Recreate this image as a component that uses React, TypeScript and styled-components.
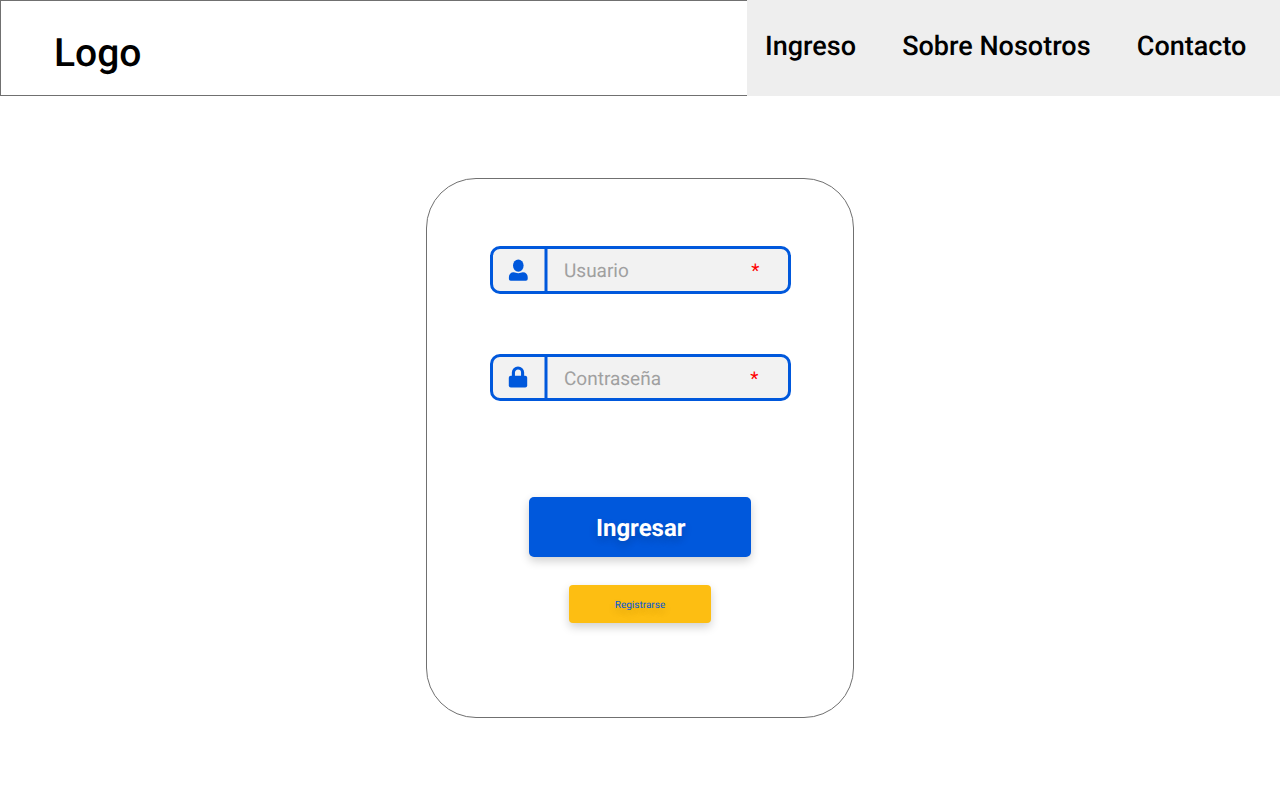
import React from "react";
import styled, { createGlobalStyle } from "styled-components";

const Global = createGlobalStyle`
  *, *::before, *::after { box-sizing: border-box; }
  body { margin: 0; background: #fff; font-family: Roboto, sans-serif; text-rendering: geometricPrecision; }
  button { text-rendering: inherit; }
`;
const Page = styled.div`
  min-height: 800px;
`;
const Header = styled.header`
  display: flex;
  height: 96px;
`;
const Brand = styled.div`
  width: 747px;
  border: 1px solid #707070;
  border-right: 0;
  padding: 29px 0 0 53px;
  font-size: 39px;
  line-height: 47px;
  font-weight: 500;
`;
const Nav = styled.nav`
  flex: 1;
  display: flex;
  gap: 46.2px;
  padding: 30px 0 0 18px;
  background: #eee;
`;
const NavLink = styled.a`
  font-size: 27px;
  line-height: 33px;
  font-weight: 500;
  color: #000;
  white-space: nowrap;
`;
const Card = styled.form`
  width: 428px;
  height: 540px;
  margin: 82px auto 0;
  padding-top: 67px;
  border: 1px solid #707070;
  border-radius: 50px;
  display: flex;
  flex-direction: column;
  align-items: center;
`;
const Field = styled.label<{ $height: number }>`
  display: flex;
  width: 301px;
  height: ${(p) => p.$height}px;
  margin-bottom: 60px;
  border: 3px solid #0058dc;
  border-radius: 10px;
  background: #f2f2f2;
`;
const IconCell = styled.span<{ $top: number }>`
  width: 55px;
  background: linear-gradient(
    90deg,
    rgba(0, 88, 220, 0.5) 1px,
    #0058dc 1px,
    #0058dc 3px,
    rgba(0, 88, 220, 0.5) 3px
  ) right / 4px 100% no-repeat;
  padding: ${(p) => p.$top}px 0 0 15px;
  svg { display: block; }
`;
const Hint = styled.span`
  flex: 1;
  padding: 10px 0 0 16.5px;
  font-size: 19px;
  line-height: 23px;
  color: #a0a0a0;
`;
const Required = styled.span<{ $right: number }>`
  padding: 10px ${(p) => p.$right}px 0 0;
  font-size: 19px;
  line-height: 23px;
  color: #f00;
`;
const Submit = styled.button`
  width: 222px;
  height: 60px;
  margin-top: 36px;
  padding: 2px 0 0 1.5px;
  border: 0;
  border-radius: 5px;
  background: #0058dc;
  box-shadow: 0 4px 10px rgba(0, 0, 0, 0.19);
  color: #fff;
  font: 700 24px/28px Roboto, sans-serif;
  text-shadow: 0 4px 9px rgba(0, 0, 0, 0.19);
`;
const Register = styled.button`
  width: 142px;
  height: 38px;
  margin-top: 28px;
  padding: 3px 0 0;
  border: 0;
  border-radius: 4px;
  background: #fdbe12;
  box-shadow: 0 4px 10px rgba(0, 0, 0, 0.19);
  color: #0058dc;
  font: 400 10px/12px Roboto, sans-serif;
  text-shadow: 0 4px 9px rgba(0, 0, 0, 0.19);
`;

const UserIcon = () => (
  <svg width="21" height="22" viewBox="-0.5 0 21 22" fill="#0058dc">
    <ellipse cx="9.8" cy="6.6" rx="5.3" ry="6.1" />
    <path d="M5.2 13.2C7 13.2 7.7 14.2 9.8 14.2S12.6 13.2 14.4 13.2C17.4 13.2 19.2 15.3 19.2 18V20Q19.2 21.8 17.4 21.8H2.2Q.4 21.8 .4 20V18C.4 15.3 2.2 13.2 5.2 13.2Z" />
  </svg>
);
const LockIcon = () => (
  <svg width="21" height="22" viewBox="-0.5 0 21 22">
    <path d="M4.9 11V6.6a4.6 4.6 0 0 1 9.2 0V11" fill="none" stroke="#0058dc" strokeWidth="3.1" />
    <rect x=".3" y="9.7" width="18.4" height="11.9" rx="2" fill="#0058dc" />
  </svg>
);

export default function App() {
  return (
    <Page>
      <Global />
      <Header>
        <Brand>Logo</Brand>
        <Nav>
          <NavLink>Ingreso</NavLink>
          <NavLink>Sobre Nosotros</NavLink>
          <NavLink>Contacto</NavLink>
        </Nav>
      </Header>
      <Card>
        <Field $height={48}>
          <IconCell $top={10}><UserIcon /></IconCell>
          <Hint>Usuario</Hint>
          <Required $right={28}>*</Required>
        </Field>
        <Field $height={47}>
          <IconCell $top={9}><LockIcon /></IconCell>
          <Hint>Contraseña</Hint>
          <Required $right={29}>*</Required>
        </Field>
        <Submit type="button">Ingresar</Submit>
        <Register type="button">Registrarse</Register>
      </Card>
    </Page>
  );
}
